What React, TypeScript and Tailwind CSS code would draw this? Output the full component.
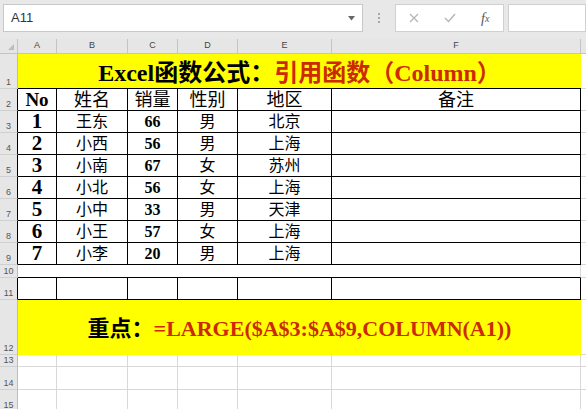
import React from 'react';

const COLS = ['A', 'B', 'C', 'D', 'E', 'F'];

const DATA = [
  ['1', '王东', '66', '男', '北京'],
  ['2', '小西', '56', '男', '上海'],
  ['3', '小南', '67', '女', '苏州'],
  ['4', '小北', '56', '女', '上海'],
  ['5', '小中', '33', '男', '天津'],
  ['6', '小王', '57', '女', '上海'],
  ['7', '小李', '20', '男', '上海'],
];

const RowHead: React.FC<{ n: number; dark?: boolean }> = ({ n, dark }) => (
  <div
    className={`flex items-end justify-center border-b border-b-[#d0d0d0] border-r bg-[#e6e6e6] pb-[1px] font-['Liberation_Sans',sans-serif] text-[9px] leading-none text-[#555] ${
      dark ? 'border-r-black' : 'border-r-[#bdbdbd]'
    }`}
  >
    {n}
  </div>
);

const ColG = () => <div className="border-b border-[#d8d8d8] bg-white" />;

const TCell: React.FC<{ children?: React.ReactNode; className?: string }> = ({ children, className = '' }) => (
  <div className={`flex items-center justify-center whitespace-nowrap border-r border-b border-black bg-white leading-none text-black ${className}`}>
    {children}
  </div>
);

const TopBar = () => (
  <div className="flex h-[39px] items-start bg-[#e8e8e8] pl-[3px] pt-[4px] font-['Liberation_Sans',sans-serif]">
    <div className="flex h-[28px] w-[360px] items-center justify-between border border-[#c8c8c8] bg-white pl-[7px] pr-[7px]">
      <span className="text-[13px] text-[#333]">A11</span>
      <svg width="7" height="5" viewBox="0 0 7 5">
        <path d="M0 0 L7 0 L3.5 4.5 Z" fill="#666" />
      </svg>
    </div>
    <div className="flex h-[28px] w-[32px] flex-col items-center justify-center gap-[2px]">
      <span className="h-[2px] w-[2px] bg-[#a8a8a8]" />
      <span className="h-[2px] w-[2px] bg-[#a8a8a8]" />
      <span className="h-[2px] w-[2px] bg-[#a8a8a8]" />
    </div>
    <div className="flex h-[28px] w-[109px] items-center border border-[#d0d0d0] bg-white">
      <div className="flex w-[36px] justify-center">
        <svg width="10" height="10" viewBox="0 0 10 10">
          <path d="M1 1 L9 9 M9 1 L1 9" stroke="#b4b4b4" strokeWidth="1.2" />
        </svg>
      </div>
      <div className="flex w-[36px] justify-center">
        <svg width="12" height="10" viewBox="0 0 12 10">
          <path d="M1 5 L4.5 8.5 L11 1" stroke="#b4b4b4" strokeWidth="1.4" fill="none" />
        </svg>
      </div>
      <div className="flex w-[36px] justify-center font-['Liberation_Serif',serif] text-[14px] italic text-[#555]">
        f<span className="mt-[3px] text-[10px]">x</span>
      </div>
    </div>
    <div className="ml-[4px] h-[28px] flex-1 border border-[#d0d0d0] bg-white" />
  </div>
);

export default function App() {
  return (
    <div className="h-[409px] w-[586px] overflow-hidden bg-white">
      <TopBar />
      <div className="grid grid-cols-[18px_39px_71px_50px_60px_94px_249px_1fr] grid-rows-[15px_35px_22px_22px_22px_22px_22px_22px_22px_22px_13px_22px_55px_12px_23px_22px] font-['Liberation_Serif','Noto_Sans_CJK_SC',serif]">
        {/* column headers */}
        <div className="flex items-end justify-end border-r border-b border-[#c4c4c4] bg-[#e6e6e6] p-[3px]">
          <svg width="6" height="6" viewBox="0 0 6 6">
            <path d="M6 0 L6 6 L0 6 Z" fill="#bdbdbd" />
          </svg>
        </div>
        {COLS.map((c) => (
          <div
            key={c}
            className="flex items-center justify-center border-r border-b border-[#c4c4c4] bg-[#e6e6e6] font-['Liberation_Sans',sans-serif] text-[9px] text-[#444]"
          >
            {c}
          </div>
        ))}
        <div className="border-b border-[#c4c4c4] bg-[#e6e6e6]" />

        {/* row 1 title */}
        <RowHead n={1} />
        <div className="col-span-6 flex items-center justify-center whitespace-nowrap border-b border-black bg-[#ffff00] pt-[3px] text-[24px] leading-none font-bold text-black">
          Excel函数公式：<span className="text-[#cc2a00]">引用函数（Column）</span>
        </div>
        <ColG />

        {/* row 2 headers */}
        <RowHead n={2} dark />
        <TCell className="text-[19px] font-bold">No</TCell>
        <TCell className="text-[18px]">姓名</TCell>
        <TCell className="text-[18px]">销量</TCell>
        <TCell className="text-[18px]">性别</TCell>
        <TCell className="text-[18px]">地区</TCell>
        <TCell className="text-[18px]">备注</TCell>
        <ColG />

        {/* rows 3-9 */}
        {DATA.map((r, i) => (
          <React.Fragment key={r[0]}>
            <RowHead n={i + 3} dark />
            <TCell className="text-[21px] font-bold">{r[0]}</TCell>
            <TCell className="text-[16px]">{r[1]}</TCell>
            <TCell className="text-[16px] font-bold">{r[2]}</TCell>
            <TCell className="text-[16px]">{r[3]}</TCell>
            <TCell className="text-[16px]">{r[4]}</TCell>
            <TCell />
            <ColG />
          </React.Fragment>
        ))}

        {/* row 10 */}
        <RowHead n={10} />
        <div className="col-span-6 border-r border-r-[#d8d8d8] border-b border-b-black bg-white" />
        <ColG />

        {/* row 11 */}
        <RowHead n={11} dark />
        {COLS.map((c) => (
          <TCell key={c} />
        ))}
        <ColG />

        {/* row 12 */}
        <RowHead n={12} />
        <div className="col-span-6 flex items-center justify-center whitespace-nowrap bg-[#ffff00] pt-[2px] text-[22px] leading-none font-bold text-black">
          重点：<span className="text-[#cc2a00]">=LARGE($A$3:$A$9,COLUMN(A1))</span>
        </div>
        <ColG />

        {/* rows 13-15 */}
        {[13, 14, 15].map((n) => (
          <React.Fragment key={n}>
            <RowHead n={n} />
            {COLS.map((c) => (
              <div key={c} className="border-r border-b border-[#d8d8d8] bg-white" />
            ))}
            <ColG />
          </React.Fragment>
        ))}
      </div>
    </div>
  );
}
